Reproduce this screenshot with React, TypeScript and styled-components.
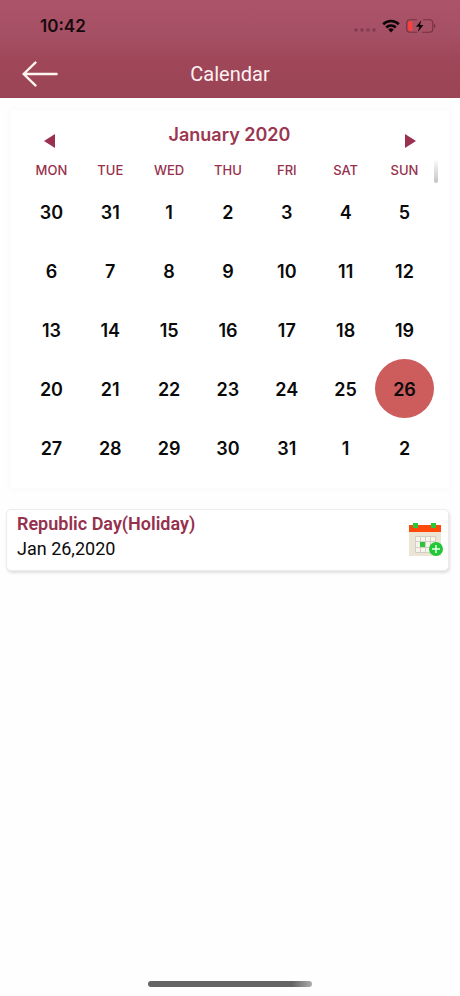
import React from "react";
import styled, { createGlobalStyle } from "styled-components";

const GlobalStyle = createGlobalStyle`
  * { box-sizing: border-box; }
  body { margin: 0; background: #fefefe; }
  button { border: 0; padding: 0; background: none; color: inherit; font: inherit; cursor: pointer; }
`;

const Screen = styled.div`
  min-height: 100vh;
  display: flex;
  flex-direction: column;
  font-family: Inter, "Liberation Sans", sans-serif;
  color: #0a0a0a;
`;

const Header = styled.header`
  background: linear-gradient(#ab5369 0%, #a65065 35%, #9f4759 62%, #9a4456 100%);
`;

const StatusBar = styled.div`
  height: 50px;
  padding: 2px 24px 0 40px;
  display: flex;
  align-items: center;
  justify-content: space-between;
`;

const Clock = styled.time`
  font-size: 17px;
  font-weight: 600;
  line-height: 20px;
  color: #160a0d;
`;

const StatusIcons = styled.div`
  display: flex;
  align-items: center;
  gap: 6px;
`;

const NavBar = styled.div`
  height: 48px;
  padding: 0 22px;
  display: grid;
  grid-template-columns: 36px 1fr 36px;
  align-items: center;
`;

const IconButton = styled.button`
  display: flex;
  align-items: center;
  justify-content: center;
`;

const PageTitle = styled.h1`
  margin: 0;
  text-align: center;
  font: 400 20px/24px Roboto, sans-serif;
  color: #fff2f4;
`;

const CalendarCard = styled.section`
  position: relative;
  margin: 12px 11px 0;
  padding: 0 15px 11px 11px;
  background: #fff;
  box-shadow: 0 0 6px 2px rgba(0, 0, 0, 0.02);
`;

const MonthBar = styled.div`
  height: 49px;
  padding: 0 18px 0 21px;
  display: grid;
  grid-template-columns: 12px 1fr 12px;
  align-items: center;
`;

const MonthTitle = styled.h2`
  margin: 0;
  text-align: center;
  font-size: 18px;
  font-weight: 600;
  line-height: 22px;
  color: #9b3751;
`;

const MonthButton = styled(IconButton)`
  height: 20px;
  margin-top: 13px;
`;

const Scrollbar = styled.div`
  position: absolute;
  top: 50px;
  right: 11px;
  width: 4px;
  height: 23px;
  border-radius: 2px;
  background: linear-gradient(#fafafa, #c4c4c4);
`;

const MonthTable = styled.table`
  width: 100%;
  table-layout: fixed;
  border-collapse: collapse;
  text-align: center;
`;

const Weekday = styled.th`
  height: 23px;
  padding: 0 0 2px;
  font-size: 13px;
  font-weight: 500;
  line-height: 16px;
  color: #96304d;
`;

const DayCell = styled.td`
  padding: 0;
`;

const DayButton = styled.button<{ $selected: boolean }>`
  display: block;
  width: 100%;
  height: 59px;
  padding-top: 2px;
  border-radius: 50%;
  background: ${(p) => (p.$selected ? "#cd5c5c" : "transparent")};
  font-size: 18px;
  font-weight: 600;
  line-height: 22px;
`;

const EventCard = styled.article`
  min-height: 62px;
  margin: 21px 11px 0 6px;
  padding: 0 5px 8px 10px;
  display: flex;
  align-items: center;
  justify-content: space-between;
  background: #fff;
  border: 1px solid #ececec;
  border-radius: 5px;
  box-shadow: 1px 2px 3px rgba(0, 0, 0, 0.12);
`;

const EventName = styled.h3`
  margin: 0;
  font: 600 18px/25px Roboto, sans-serif;
  color: #96304d;
`;

const EventDate = styled.p`
  margin: 0;
  font: 400 18px/25px Roboto, sans-serif;
`;

const AddButton = styled(IconButton)`
  margin-top: 8px;
`;

const HomeIndicator = styled.div`
  width: 164px;
  height: 6px;
  margin: auto auto 9px;
  border-radius: 3px;
  background: linear-gradient(90deg, #646464 88%, #adadad);
`;

const WEEKDAYS = ["MON", "TUE", "WED", "THU", "FRI", "SAT", "SUN"];
const WEEKS = [
  [30, 31, 1, 2, 3, 4, 5],
  [6, 7, 8, 9, 10, 11, 12],
  [13, 14, 15, 16, 17, 18, 19],
  [20, 21, 22, 23, 24, 25, 26],
  [27, 28, 29, 30, 31, 1, 2],
];

const SignalIcon = () => (
  <svg width="22" height="14" viewBox="0 0 22 14" fill="#813c4d" aria-hidden="true">
    {[2, 8, 14, 20].map((x) => (
      <circle key={x} cx={x} cy="11" r="1.8" />
    ))}
  </svg>
);

const WifiIcon = () => (
  <svg width="18" height="14" viewBox="0 0 18 14" aria-hidden="true">
    <g fill="none" stroke="#0c0507" strokeWidth="2.6">
      <path d="M1.2 5.2a11.2 11.2 0 0 1 15.6 0" />
      <path d="M4.2 8.5a6.9 6.9 0 0 1 9.6 0" />
    </g>
    <path d="M6.3 10.6a3.9 3.9 0 0 1 5.4 0L9 13.4z" fill="#0c0507" />
  </svg>
);

const BatteryIcon = () => (
  <svg width="30" height="14" viewBox="0 0 30 14" aria-hidden="true">
    <path
      d="M11 .7H4A3.3 3.3 0 0 0 .7 4v6A3.3 3.3 0 0 0 4 13.3h7M17 .7h6.5A3.3 3.3 0 0 1 26.8 4v6a3.3 3.3 0 0 1-3.3 3.3H16"
      fill="none"
      stroke="#76303f"
      strokeWidth="1.1"
    />
    <path d="M28 4.8c2 .8 2 3.6 0 4.4z" fill="#76303f" />
    <path d="M4 2.2h2.3v9.6H4A1.7 1.7 0 0 1 2.2 10V4A1.7 1.7 0 0 1 4 2.2z" fill="#ff403b" />
    <path d="M15.3 1.2 10 7.8h3.4l-1.5 5.2L17.4 6H14z" fill="#0c0507" />
  </svg>
);

const BackIcon = () => (
  <svg width="36" height="28" viewBox="0 0 36 28" fill="none" stroke="#fff5ef" strokeWidth="2.4" strokeLinecap="round" strokeLinejoin="round" aria-hidden="true">
    <path d="M13.4 2.6 1.6 14l11.8 11.4M1.6 14h33" />
  </svg>
);

const Triangle = ({ d }: { d: string }) => (
  <svg width="12" height="16" viewBox="0 0 12 16" fill="#9b3150" aria-hidden="true">
    <path d={d} />
  </svg>
);

const AddToCalendarIcon = () => (
  <svg width="34" height="34" viewBox="0 0 34 34" aria-hidden="true">
    <path d="M0 5h32v28H0z" fill="#ece5d5" />
    <path d="M0 2h32v7H0z" fill="#ff4a0c" />
    <path d="M4 0h5v5H4zM22 0h5v5h-5z" fill="#2bc73a" />
    <path d="M6.5 13.5h20v16h-20zM6.5 18.5h20M6.5 24.5h20M11.5 13.5v16M16.5 13.5v16M21.5 13.5v16" fill="#f8f5ed" stroke="#d3cfc4" />
    <path d="M11 19h5v5h-5z" fill="#2bc73a" />
    <circle cx="27" cy="26" r="7" fill="#22c838" />
    <path d="M27 22v8M23 26h8" stroke="#e6ffe8" strokeWidth="1.5" />
  </svg>
);

export default function App() {
  return (
    <Screen>
      <GlobalStyle />
      <Header>
        <StatusBar>
          <Clock>10:42</Clock>
          <StatusIcons>
            <SignalIcon />
            <WifiIcon />
            <BatteryIcon />
          </StatusIcons>
        </StatusBar>
        <NavBar>
          <IconButton type="button" aria-label="Back">
            <BackIcon />
          </IconButton>
          <PageTitle>Calendar</PageTitle>
        </NavBar>
      </Header>
      <main>
        <CalendarCard>
          <MonthBar>
            <MonthButton type="button" aria-label="Previous month">
              <Triangle d="M12 1v14L1 8z" />
            </MonthButton>
            <MonthTitle>January 2020</MonthTitle>
            <MonthButton type="button" aria-label="Next month">
              <Triangle d="M1 1v14l11-7z" />
            </MonthButton>
          </MonthBar>
          <MonthTable aria-label="January 2020">
            <thead>
              <tr>
                {WEEKDAYS.map((day) => (
                  <Weekday key={day} scope="col">{day}</Weekday>
                ))}
              </tr>
            </thead>
            <tbody>
              {WEEKS.map((week, row) => (
                <tr key={row}>
                  {week.map((day) => (
                    <DayCell key={day}>
                      <DayButton type="button" $selected={day === 26} aria-pressed={day === 26}>
                        {day}
                      </DayButton>
                    </DayCell>
                  ))}
                </tr>
              ))}
            </tbody>
          </MonthTable>
          <Scrollbar />
        </CalendarCard>
        <EventCard>
          <div>
            <EventName>Republic Day(Holiday)</EventName>
            <EventDate>Jan 26,2020</EventDate>
          </div>
          <AddButton type="button" aria-label="Add to calendar">
            <AddToCalendarIcon />
          </AddButton>
        </EventCard>
      </main>
      <HomeIndicator />
    </Screen>
  );
}
